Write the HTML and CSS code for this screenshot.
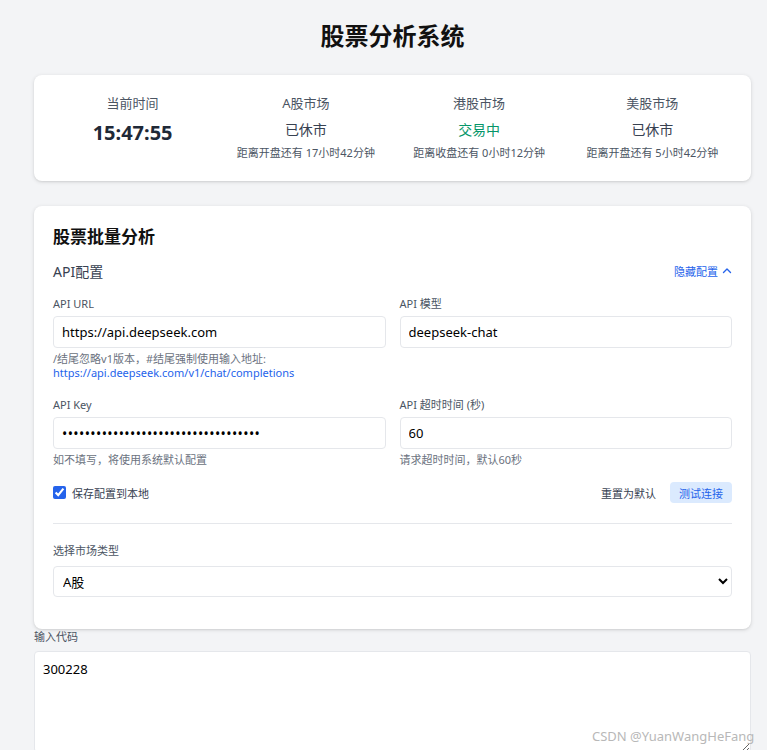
FILE: index.html
```html
<!DOCTYPE html>
<html lang="zh-CN">
<head>
    <meta charset="UTF-8">
    <meta name="viewport" content="width=device-width, initial-scale=1.0">
    <title>股票分析系统</title>
    <link rel="stylesheet" href="styles.css">
</head>
<body>
    <div class="container">
        <h1 class="page-title">股票分析系统</h1>

        <div class="card market-card">
            <div class="market-col">
                <div class="market-label">当前时间</div>
                <div class="clock">15:47:55</div>
            </div>
            <div class="market-col">
                <div class="market-label">A股市场</div>
                <div class="market-status">已休市</div>
                <div class="market-sub">距离开盘还有 17小时42分钟</div>
            </div>
            <div class="market-col">
                <div class="market-label">港股市场</div>
                <div class="market-status open">交易中</div>
                <div class="market-sub">距离收盘还有 0小时12分钟</div>
            </div>
            <div class="market-col">
                <div class="market-label">美股市场</div>
                <div class="market-status">已休市</div>
                <div class="market-sub">距离开盘还有 5小时42分钟</div>
            </div>
        </div>

        <div class="card analysis-card">
            <h2 class="card-title">股票批量分析</h2>
            <div class="section-head">
                <span class="section-name">API配置</span>
                <a class="toggle-link" href="#">隐藏配置
                    <svg width="10" height="10" viewBox="0 0 10 10"><path d="M1.5 6.5 L5 3 L8.5 6.5" fill="none" stroke="currentColor" stroke-width="1.4" stroke-linecap="round" stroke-linejoin="round"/></svg>
                </a>
            </div>

            <div class="config-grid">
                <div class="field">
                    <label class="field-label">API URL</label>
                    <input class="text-input" type="text" value="https://api.deepseek.com">
                    <div class="hint">/结尾忽略v1版本，#结尾强制使用输入地址:<br><span class="hint-link">https://api.deepseek.com/v1/chat/completions</span></div>
                </div>
                <div class="field">
                    <label class="field-label">API 模型</label>
                    <input class="text-input" type="text" value="deepseek-chat">
                </div>
                <div class="field">
                    <label class="field-label">API Key</label>
                    <input class="text-input password" type="password" value="sk-0123456789abcdef0123456789abcdef">
                    <div class="hint">如不填写，将使用系统默认配置</div>
                </div>
                <div class="field">
                    <label class="field-label">API 超时时间 (秒)</label>
                    <input class="text-input" type="text" value="60">
                    <div class="hint">请求超时时间，默认60秒</div>
                </div>
            </div>

            <div class="action-row">
                <label class="save-check"><input type="checkbox" checked> 保存配置到本地</label>
                <div class="actions">
                    <button class="btn-plain">重置为默认</button>
                    <button class="btn-soft">测试连接</button>
                </div>
            </div>

            <hr class="divider">

            <label class="field-label market-type-label">选择市场类型</label>
            <select class="select-input">
                <option>A股</option>
                <option>港股</option>
                <option>美股</option>
            </select>
        </div>

        <label class="field-label code-label">输入代码</label>
        <textarea class="code-input">300228</textarea>
    </div>
    <div class="watermark">CSDN @YuanWangHeFang</div>
</body>
</html>
```

FILE: styles.css
```css
* { box-sizing: border-box; }
body {
    margin: 0;
    background: #f3f4f6;
    font-family: "Noto Sans", "Noto Sans CJK SC", sans-serif;
    color: #1f2937;
    height: 750px;
    overflow: hidden;
    position: relative;
}
.container {
    margin: 0 16px 0 34px;
    padding-top: 20px;
}
.page-title {
    margin: 0 0 23px;
    text-align: center;
    font-size: 24px;
    line-height: 32px;
    font-weight: 700;
    color: #111;
}
.card {
    background: #fff;
    border-radius: 8px;
    box-shadow: 0 1px 4px rgba(0, 0, 0, 0.12), 0 1px 2px rgba(0, 0, 0, 0.06);
}

/* 市场状态 */
.market-card {
    display: grid;
    grid-template-columns: repeat(4, 1fr);
    gap: 16px;
    padding: 18px 20px 20px;
    margin-bottom: 25px;
}
.market-col { text-align: center; }
.market-label {
    font-size: 13px;
    line-height: 20px;
    color: #4b5563;
}
.clock {
    margin-top: 6px;
    font-size: 20px;
    line-height: 28px;
    font-weight: 700;
    color: #1f2937;
}
.market-status {
    margin-top: 6px;
    font-size: 14px;
    line-height: 22px;
    color: #374151;
}
.market-status.open { color: #059669; }
.market-sub {
    margin-top: 4px;
    font-size: 11px;
    line-height: 16px;
    color: #4b5563;
}

/* 批量分析 */
.analysis-card {
    padding: 20px 19px 32px;
}
.card-title {
    margin: 0 0 13px;
    font-size: 17px;
    line-height: 22px;
    font-weight: 700;
    color: #111;
}
.section-head {
    display: flex;
    justify-content: space-between;
    align-items: center;
    height: 20px;
    margin-bottom: 15px;
}
.section-name {
    font-size: 14px;
    color: #374151;
}
.toggle-link {
    display: flex;
    align-items: center;
    gap: 4px;
    font-size: 11px;
    color: #2563eb;
    text-decoration: none;
}
.config-grid {
    display: grid;
    grid-template-columns: 1fr 1fr;
    column-gap: 14px;
    row-gap: 17px;
}
.field-label {
    display: block;
    font-size: 11px;
    line-height: 16px;
    color: #4b5563;
    margin-bottom: 4px;
}
.text-input {
    display: block;
    width: 100%;
    height: 32px;
    padding: 0 8px;
    border: 1px solid #e5e7eb;
    border-radius: 4px;
    font-family: "Noto Sans", "Noto Sans CJK SC", sans-serif;
    font-size: 13px;
    color: #000;
    background: #fff;
}
.text-input.password {
    font-size: 14px;
    letter-spacing: 0.4px;
}
.hint {
    margin-top: 4px;
    font-size: 11px;
    line-height: 14px;
    color: #6b7280;
}
.hint-link { color: #2563eb; }
.action-row {
    display: flex;
    justify-content: space-between;
    align-items: center;
    height: 21px;
    margin-top: 15px;
}
.save-check {
    display: flex;
    align-items: center;
    gap: 6px;
    font-size: 11px;
    color: #374151;
}
.save-check input {
    margin: 0;
    width: 13px;
    height: 13px;
    accent-color: #2563eb;
}
.actions {
    display: flex;
    align-items: center;
    gap: 14px;
}
.btn-plain, .btn-soft {
    border: none;
    background: none;
    font-family: "Noto Sans", "Noto Sans CJK SC", sans-serif;
    font-size: 11px;
    height: 21px;
    padding: 0 9px;
    border-radius: 4px;
    cursor: pointer;
}
.btn-plain { color: #374151; padding: 0; }
.btn-soft {
    background: #dbeafe;
    color: #2563eb;
}
.divider {
    border: none;
    border-top: 1px solid #e5e7eb;
    margin: 20px 0 19px;
}
.market-type-label { margin-bottom: 7px; }
.select-input {
    display: block;
    width: 100%;
    height: 31px;
    padding: 0 5px;
    border: 1px solid #e5e7eb;
    border-radius: 4px;
    font-family: "Noto Sans", "Noto Sans CJK SC", sans-serif;
    font-size: 13px;
    color: #000;
    background: #fff;
}
.code-label {
    margin: 0 0 6px;
}
.code-input {
    display: block;
    width: 100%;
    height: 102px;
    padding: 8px;
    border: 1px solid #e5e7eb;
    border-radius: 4px;
    font-family: "Noto Sans", "Noto Sans CJK SC", sans-serif;
    font-size: 13px;
    color: #000;
    background: #fff;
}
.watermark {
    position: absolute;
    left: 592px;
    top: 727px;
    font-size: 13px;
    color: #b8b8b8;
    font-family: "Liberation Sans Narrow", "Noto Sans", sans-serif;
}
```
